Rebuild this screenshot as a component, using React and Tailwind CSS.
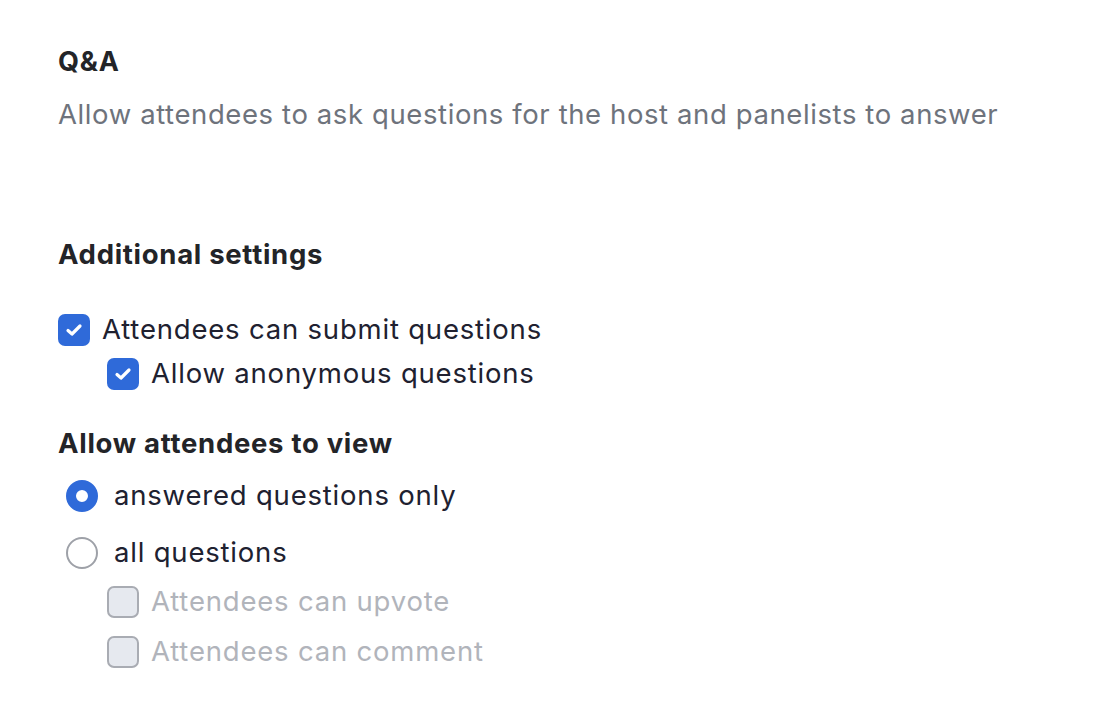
import React, { useState } from "react";

function Check({ checked, disabled, onChange }) {
    if (disabled) {
        return <span className="w-8 h-8 rounded-[7px] border-2 border-[#a9acb3] bg-[#e6e9ef] shrink-0" />;
    }
    return (
        <button
            onClick={onChange}
            className={`w-8 h-8 rounded-[7px] shrink-0 flex items-center justify-center ${checked ? "bg-[#2f6ad9]" : "border-2 border-[#a9acb3] bg-white"}`}
        >
            {checked && (
                <svg width="20" height="20" viewBox="0 0 20 20" fill="none">
                    <path d="M4 10.5 L8 14 L16 6" stroke="white" strokeWidth="3.2" strokeLinecap="round" strokeLinejoin="round" />
                </svg>
            )}
        </button>
    );
}

function Radio({ checked, onClick }) {
    return (
        <button
            onClick={onClick}
            className={`w-8 h-8 rounded-full shrink-0 ${checked ? "border-[10px] border-[#2f6ad9] bg-white" : "border-2 border-[#9ea1a8] bg-white"}`}
        />
    );
}

export default function App() {
    const [submit, setSubmit] = useState(true);
    const [anon, setAnon] = useState(true);
    const [view, setView] = useState("answered");

    const label = "text-[27.5px] tracking-[0.8px]";

    return (
        <div className="min-h-screen bg-white pl-[58px] pt-[44px] font-['Inter',sans-serif] text-[#202130]">
            <h2 className="text-[27px] tracking-[0.8px] font-bold leading-[36px] text-[#232428]">Q&amp;A</h2>
            <p className="text-[27.5px] tracking-[0.6px] leading-[36px] text-[#6e737c] mt-[16px]">
                Allow attendees to ask questions for the host and panelists to answer
            </p>

            <h3 className="text-[27.5px] tracking-[0.7px] font-bold leading-[36px] text-[#232428] mt-[104px]">Additional settings</h3>

            <div className="mt-[38px] flex flex-col">
                <label className="flex items-center gap-3 h-[40px]">
                    <Check checked={submit} onChange={() => setSubmit(!submit)} />
                    <span className={label}>Attendees can submit questions</span>
                </label>
                <label className="flex items-center gap-3 h-[40px] pl-[49px] mt-[4px]">
                    <Check checked={anon} onChange={() => setAnon(!anon)} />
                    <span className={label}>Allow anonymous questions</span>
                </label>
            </div>

            <h3 className="text-[27.5px] tracking-[0.7px] font-bold leading-[36px] text-[#232428] mt-[31px]">Allow attendees to view</h3>

            <div className="mt-[15px] flex flex-col pl-[8px]">
                <label className="flex items-center gap-4 h-[40px]">
                    <Radio checked={view === "answered"} onClick={() => setView("answered")} />
                    <span className={label}>answered questions only</span>
                </label>
                <label className="flex items-center gap-4 h-[40px] mt-[17px]">
                    <Radio checked={view === "all"} onClick={() => setView("all")} />
                    <span className={label}>all questions</span>
                </label>
                <label className="flex items-center gap-3 h-[40px] pl-[41px] mt-[9px]">
                    <Check disabled />
                    <span className={`${label} text-[#b1b4bb]`}>Attendees can upvote</span>
                </label>
                <label className="flex items-center gap-3 h-[40px] pl-[41px] mt-[10px]">
                    <Check disabled />
                    <span className={`${label} text-[#b1b4bb]`}>Attendees can comment</span>
                </label>
            </div>
        </div>
    );
}
